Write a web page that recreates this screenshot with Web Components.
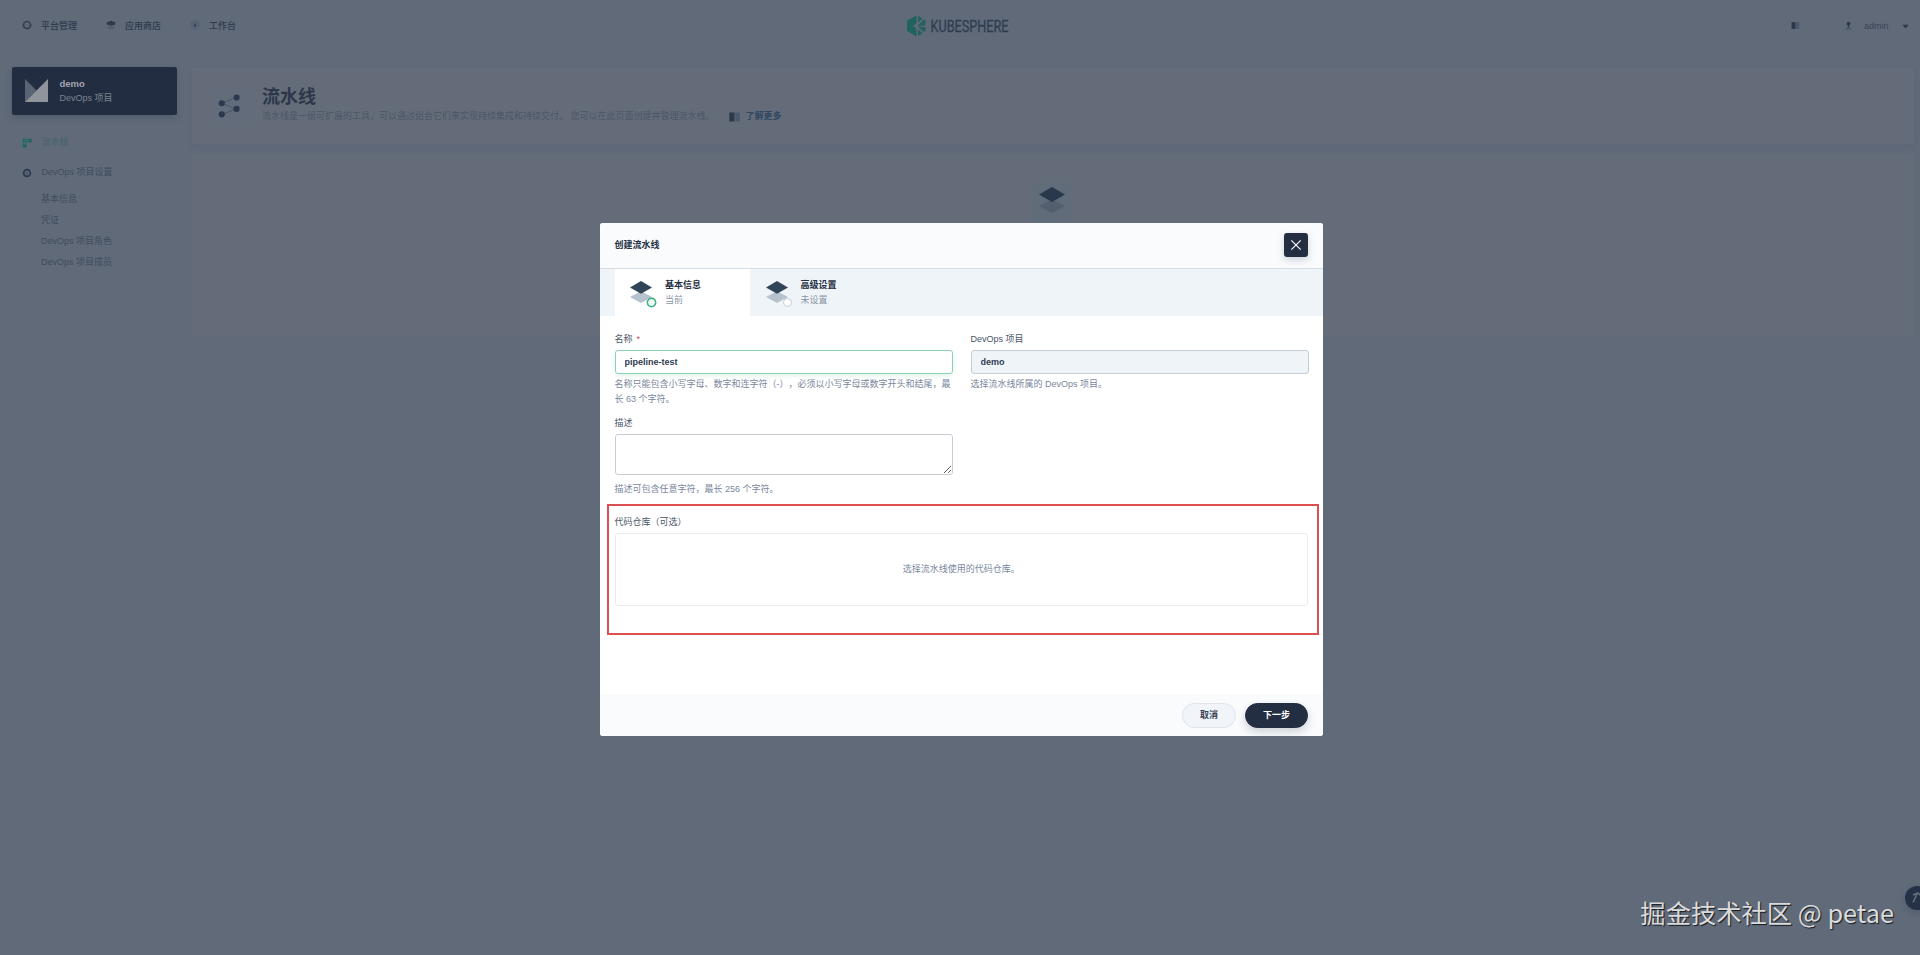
<!DOCTYPE html>
<html lang="zh-CN">
<head>
<meta charset="utf-8">
<title>KubeSphere</title>
<style>
  html, body { margin: 0; height: 100%; overflow: hidden; }
  body {
    font-family: "Liberation Sans", "Noto Sans CJK SC", sans-serif;
    font-size: 9px;
    line-height: 15px;
    text-spacing-trim: space-all;
    background: #606a79;
    color: #344054;
    --page-dark: #2b384d;
    --page-text: #2f3a4d;
    --page-muted: #414c5e;
    --page-faint: #4b5667;
    --page-green: #1f6661;
  }
</style>
</head>
<body>
<devops-page></devops-page>

<script>
const define = (name, html, init) => {
    const template = document.createElement('template');
    template.innerHTML = html;
    customElements.define(name, class extends HTMLElement {
        constructor() {
            super();
            this.attachShadow({ mode: 'open' })
                .appendChild(template.content.cloneNode(true));
        }
        connectedCallback() {
            if (init) init(this, this.shadowRoot);
        }
    });
};

const icons = {
    gear: `<path d="M8 .5l1.200 1.800 2.100-.7.6 2.100 2.200.3-.3 2.200 1.800 1.300-1.300 1.700.7 2.100-2.100.8-.4 2.100-2.200-.2L8 15.500l-2.200-1.800-2.200.2-.4-2.100-2.100-.8.7-2.100L.5 7.200l1.800-1.300L2 3.700l2.200-.3.600-2.100 2.100.7z" fill="currentColor"/><circle cx="8" cy="8" r="4.300" fill="#606a79"/><circle cx="8" cy="8" r="1.300" fill="#4f5a6b"/>`,
    cog: `<circle cx="8" cy="8" r="5.400" fill="none" stroke="currentColor" stroke-width="2.800"/><circle cx="8" cy="8" r="2" fill="#4a5567"/>`,
    shop: `<path d="M3 9h10v5.500H3z" fill="#535e6f"/><path d="M8 1l7.500 3-1.800 3.800H10L8 9.500 6 7.800H2.300L.5 4z" fill="currentColor"/>`,
    bench: `<circle cx="8" cy="8" r="6.800" fill="#596476" stroke="#525d6f"/><path d="M8 3.500l1.200 4 1.500 2.500H5.300L6.800 7.500z" fill="currentColor"/>`,
    book: `<path d="M1 2h7v12H1z" fill="currentColor"/><path d="M9 2h6v12H9z" fill="#4c586b"/>`,
    user: `<circle cx="8" cy="4.500" r="3.300" fill="currentColor"/><path d="M6.800 7h2.400v4H6.800z" fill="currentColor"/><path d="M2.500 15c0-3 2-4.500 5.500-4.500s5.500 1.500 5.500 4.500z" fill="#4c586b"/>`,
    caret: `<path d="M2.500 5h11L8 11.500z" fill="currentColor"/>`,
    pipeline: `<path d="M1 1h6.500v6H1zM9 1h6.500v6H9zM1 8.800h6.500V15H1z" fill="currentColor"/><path d="M4 3v9M4 4h8" stroke="#37806f" fill="none"/>`,
    layers: `<path d="M8 7.500l8 4.200L8 16 0 11.700z" fill="var(--back, #b6c2cd)"/><path d="M8 0l8 4.650L8 9.300 0 4.650z" fill="var(--front, #324558)"/>`,
    flow: `<path d="M12.200 1.900L2 6l10.200 4.100L2 14.100" fill="none" stroke="#4a576a" stroke-width=".8"/><g fill="currentColor"><circle cx="12.800" cy="1.900" r="2.200"/><circle cx="2" cy="6" r="2.200"/><circle cx="12.800" cy="10.100" r="2.200"/><circle cx="2" cy="14.100" r="2.200"/></g>`,
    close: `<path d="M.5.5l15 15M15.500.5l-15 15" stroke="currentColor" stroke-width="1.900" fill="none"/>`
};

define('ks-icon', `
  <style>
    :host { display: inline-block; flex: none; width: 10px; height: 10px; white-space: normal; }
    svg { display: block; width: 100%; height: 100%; overflow: visible; }
  </style>
  <svg viewBox="0 0 16 16"></svg>
`, (host, root) => {
    root.querySelector('svg').innerHTML = icons[host.getAttribute('name')];
});

define('ks-logo', `
  <style>
    :host { display: block; width: 106px; height: 24px; }
    svg { display: block; overflow: visible; }
    text { font: 400 16px Roboto, sans-serif; fill: #2f3c50; stroke: #2f3c50; stroke-width: .3px; }
  </style>
  <svg width="106" height="24" viewBox="0 0 106 24">
    <path d="M9.500 1.500L0 6.800v10l9.500 5.700V15L6 12l3.500-3z" fill="#1f625e"/>
    <path d="M11 2l4.500 2.600L11 8.500zM17 5.500l1.500 1v5L10.500 12zM10.500 12.500l8 .5v4.200l-1.500.9zM11 15l4.500 4.300L11 22z" fill="#25615f"/>
    <text x="23.500" y="18" textLength="78" lengthAdjust="spacingAndGlyphs">KUBESPHERE</text>
  </svg>
`);

define('ks-header', `
  <style>
    :host {
      display: grid;
      grid-template-columns: 1fr auto 1fr;
      align-items: center;
      height: 52px;
      color: var(--page-text);
    }
    nav { display: flex; padding-left: 22px; font-weight: 500; }
    nav span { display: flex; align-items: center; width: 84px; }
    nav ks-icon { margin-right: 9px; position: relative; top: -1px; }
    .right { display: flex; align-items: center; justify-content: flex-end; padding-right: 10px; color: #3a4558; }
    .right ks-icon { color: var(--page-dark); width: 9px; height: 9px; position: relative; top: -1px; }
    .right .caret { top: 0; }
    .right .book { width: 11px; }
    .user { margin: 0 11px 0 43px; }
    .name { width: 25px; margin-right: 12px; }
  </style>
  <nav>
    <span><ks-icon name="gear"></ks-icon>平台管理</span>
    <span><ks-icon name="shop"></ks-icon>应用商店</span>
    <span><ks-icon name="bench"></ks-icon>工作台</span>
  </nav>
  <ks-logo></ks-logo>
  <div class="right">
    <ks-icon class="book" name="book"></ks-icon>
    <ks-icon class="user" name="user"></ks-icon>
    <span class="name">admin</span>
    <ks-icon class="caret" name="caret"></ks-icon>
  </div>
`);

define('ks-project', `
  <style>
    :host {
      display: flex;
      align-items: center;
      box-sizing: border-box;
      height: 48px;
      padding: 0 12.500px;
      border-radius: 2px;
      background: #232d42;
      box-shadow: 0 3px 6px rgba(36, 46, 66, .22);
      color: #7b8391;
    }
    svg { margin-right: 12px; }
    strong { display: block; color: #a1a6ae; font-weight: 700; font-size: 9.500px; }
  </style>
  <svg width="23" height="23" viewBox="0 0 23 23">
    <path d="M0 0l11.500 11.500L0 23z" fill="#5a6474"/>
    <path d="M23 0v23H0z" fill="#90959d"/>
  </svg>
  <div><strong><slot name="name"></slot></strong><slot></slot></div>
`);

define('ks-sidebar', `
  <style>
    :host { display: block; width: 165px; padding: 14.500px 0 0 12px; color: var(--page-muted); }
    .item { display: flex; align-items: center; height: 15px; margin: 20.500px 0 0 10px; }
    .item + .item { margin-top: 15px; }
    .item ks-icon { margin-right: 9.500px; color: var(--page-dark); }
    .active ks-icon { color: var(--page-green); }
    .active { color: #446369; }
    ul { list-style: none; margin: 9px 0 0; padding: 0 0 0 29px; }
    li { height: 21px; line-height: 21px; }
  </style>
  <ks-project><span slot="name">demo</span>DevOps 项目</ks-project>
  <div class="item active"><ks-icon name="pipeline"></ks-icon><span>流水线</span></div>
  <div class="item"><ks-icon name="cog"></ks-icon>DevOps 项目设置</div>
  <ul>
    <li>基本信息</li>
    <li>凭证</li>
    <li>DevOps 项目角色</li>
    <li>DevOps 项目成员</li>
  </ul>
`);

define('ks-banner', `
  <style>
    :host {
      display: flex;
      align-items: center;
      box-sizing: border-box;
      height: 76px;
      padding-left: 19px;
      background: #656c79;
      box-shadow: 0 3px 6px rgba(80, 93, 117, .1);
      color: var(--page-faint);
    }
    .badge { display: flex; align-items: center; justify-content: center; width: 36px; height: 36px; margin-right: 15px; border-radius: 4px; background: #626c7a; color: var(--page-dark); }
    .badge ks-icon { width: 22px; height: 22px; position: relative; left: 1px; }
    .text { padding-bottom: 3px; }
    h1 { margin: 0; font-size: 18px; line-height: 24px; font-weight: 700; color: #2c374a; }
    p { display: flex; align-items: center; margin: 0; white-space: pre; }
    a { display: flex; align-items: center; margin-left: 13px; font-weight: 700; color: #2f4661; }
    a ks-icon { width: 13px; height: 12px; margin-right: 5px; color: var(--page-dark); }
  </style>
  <div class="badge"><ks-icon name="flow"></ks-icon></div>
  <div class="text">
    <h1><slot name="title"></slot></h1>
    <p><slot></slot><a><ks-icon name="book"></ks-icon>了解更多</a></p>
  </div>
`);

define('ks-empty', `
  <style>
    :host { display: flex; justify-content: center; box-sizing: border-box; height: 182px; margin-top: 10px; padding: 29px 2px 0 0; background: #656c79; }
    div { display: flex; justify-content: center; box-sizing: border-box; width: 38px; height: 42px; padding-top: 4px; border-radius: 6px; background: #616c7a; }
    ks-icon { width: 26px; height: 26px; --front: #2a384c; --back: #535e6e; }
  </style>
  <div><ks-icon name="layers"></ks-icon></div>
`);

define('ks-step', `
  <style>
    :host { display: flex; align-items: center; box-sizing: border-box; width: 135.500px; padding-left: 15.500px; color: #8b96a8; }
    :host([active]) { background: #fff; }
    .icon { position: relative; margin-right: 13px; }
    ks-icon { display: block; width: 22px; height: 22px; }
    i { position: absolute; right: -4px; bottom: -4px; box-sizing: border-box; width: 9px; height: 9px; border: 1px solid #c3cbd5; border-radius: 50%; background: #fff; }
    :host([active]) i { border: 1px solid #2fa878; box-shadow: 0 0 0 .4px #2fa878; background: #eefaf4; }
    .text { padding-top: 2px; }
    strong { display: block; font-weight: 700; color: #242e42; }
  </style>
  <div class="icon"><ks-icon name="layers"></ks-icon><i></i></div>
  <div class="text"><strong><slot></slot></strong><slot name="state"></slot></div>
`);

define('ks-field', `
  <style>
    :host { display: block; color: #79879c; }
    label { display: block; height: 15px; margin-bottom: 3px; color: #4a5568; }
    label i { color: #d9405b; font-style: normal; margin-left: 4px; }
    label i[hidden] { display: none; }
  </style>
  <label><span></span><i hidden>*</i></label>
  <slot></slot>
  <slot name="help"></slot>
`, (host, root) => {
    root.querySelector('span').textContent = host.getAttribute('label');
    root.querySelector('i').hidden = !host.hasAttribute('required');
});

define('ks-input', `
  <style>
    :host { display: block; margin-bottom: 3px; }
    input {
      display: block;
      box-sizing: border-box;
      width: 100%;
      height: 24px;
      padding: 0 9px;
      border: 1px solid #c3cdd6;
      border-radius: 3px;
      font: inherit;
      font-weight: 700;
      color: #303c52;
      background: #eff4f9;
    }
    :host([focused]) input { border-color: #8fd0b2; background: #fff; box-shadow: 0 2px 5px rgba(85, 188, 138, .18); }
  </style>
  <input>
`, (host, root) => {
    const input = root.querySelector('input');
    input.value = host.getAttribute('value');
    input.readOnly = !host.hasAttribute('focused');
});

define('ks-button', `
  <style>
    :host { display: block; }
    button { display: block; box-sizing: border-box; height: 25px; padding: 0 17px; border: 1px solid #dfe5ec; border-radius: 13px; background: #f1f5f9; color: #3a4458; font: inherit; font-weight: 700; }
    :host([primary]) button { border-color: #242e42; background: #242e42; color: #fff; box-shadow: 0 4px 8px rgba(36, 46, 66, .2); }
  </style>
  <button><slot></slot></button>
`);

define('ks-modal', `
  <style>
    :host { display: flex; flex-direction: column; box-sizing: border-box; width: 723.500px; height: 513.500px; border-radius: 3px; overflow: hidden; background: #fff; }
    header { display: flex; align-items: center; justify-content: space-between; box-sizing: border-box; height: 46px; padding: 0 15px; border-bottom: 1px solid #d5dee5; background: #f9fbfd; font-weight: 700; color: #242e42; }
    .close { display: flex; align-items: center; justify-content: center; width: 24px; height: 24px; border-radius: 3px; background: #242e42; color: #fff; box-shadow: 0 3px 7px rgba(36, 46, 66, .2); }
    .steps { display: flex; height: 47.500px; padding-left: 15px; background: #eff4f8; }
    main { flex: 1; padding: 16px 15px 0; }
    footer { display: flex; align-items: center; justify-content: flex-end; gap: 9px; box-sizing: border-box; height: 42px; padding: 0 15px; background: #f9fbfd; }
  </style>
  <header><slot name="title"></slot><span class="close"><ks-icon name="close"></ks-icon></span></header>
  <div class="steps"><slot name="steps"></slot></div>
  <main><slot></slot></main>
  <footer><slot name="footer"></slot></footer>
`);

define('pipeline-form', `
  <style>
    :host { display: block; }
    .grid { display: grid; grid-template-columns: 338px 338px; column-gap: 18px; row-gap: 9px; }
    textarea { display: block; box-sizing: border-box; width: 100%; height: 41px; margin-bottom: 7px; border: 1px solid #c5ccd5; border-radius: 3px; background: #fff; }
    /* highlight frame reaches past the form's own padding */
    .repo { box-sizing: border-box; height: 131px; margin: 7px -11px 0 -8px; padding: 9px 9px 0 6px; border: 2px solid #dd5052; }
    .pick { display: flex; align-items: center; justify-content: center; box-sizing: border-box; height: 73px; border: 1px solid #e8ecf1; border-radius: 3px; color: #79879c; }
  </style>
  <div class="grid">
    <ks-field label="名称" required>
      <ks-input value="pipeline-test" focused></ks-input>
      <span slot="help">名称只能包含小写字母、数字和连字符（-），必须以小写字母或数字开头和结尾，最长 63 个字符。</span>
    </ks-field>
    <ks-field label="DevOps 项目">
      <ks-input value="demo"></ks-input>
      <span slot="help">选择流水线所属的 DevOps 项目。</span>
    </ks-field>
    <ks-field label="描述">
      <textarea></textarea>
      <span slot="help">描述可包含任意字符，最长 256 个字符。</span>
    </ks-field>
  </div>
  <div class="repo">
    <ks-field label="代码仓库（可选）"><div class="pick">选择流水线使用的代码仓库。</div></ks-field>
  </div>
`);

define('devops-page', `
  <style>
    :host { display: block; position: relative; height: 955px; overflow: hidden; }
    .body { display: flex; }
    .content { flex: 1; padding: 16px 6px 0 15px; }
    ks-modal { position: absolute; left: 599.500px; top: 222.500px; }
    .float { position: absolute; left: 1905px; top: 886px; width: 24px; height: 24px; border-radius: 50%; background: #253147; box-shadow: 0 3px 6px rgba(36, 46, 66, .2); }
    .float svg { display: block; }
    .mark { position: absolute; right: 26px; bottom: 24px; font: 25.300px/37px "Noto Sans CJK SC", sans-serif; color: #dadbdd; text-shadow: 1px 1px 1px #15191f; white-space: nowrap; }
  </style>
  <ks-header></ks-header>
  <div class="body">
    <ks-sidebar></ks-sidebar>
    <div class="content">
      <ks-banner><span slot="title">流水线</span>流水线是一组可扩展的工具，可以通过组合它们来实现持续集成和持续交付。 您可以在此页面创建并管理流水线。</ks-banner>
      <ks-empty></ks-empty>
    </div>
  </div>
  <ks-modal>
    <span slot="title">创建流水线</span>
    <ks-step slot="steps" active>基本信息<span slot="state">当前</span></ks-step>
    <ks-step slot="steps">高级设置<span slot="state">未设置</span></ks-step>
    <pipeline-form></pipeline-form>
    <ks-button slot="footer">取消</ks-button>
    <ks-button slot="footer" primary>下一步</ks-button>
  </ks-modal>
  <div class="float">
    <svg width="24" height="24" viewBox="0 0 24 24"><path d="M8 16.500L12 8M8 9l5-2 3 3" fill="none" stroke="#667080" stroke-width="1.500"/></svg>
  </div>
  <div class="mark">掘金技术社区 @ petae</div>
`);
</script>
</body>
</html>
